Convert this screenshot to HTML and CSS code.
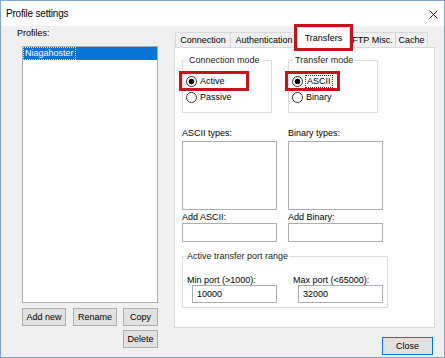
FILE: index.html
```html
<!DOCTYPE html>
<html>
<head>
<meta charset="utf-8">
<title>Profile settings</title>
<link rel="stylesheet" href="styles.css">
</head>
<body>
<div class="window">
  <div class="titlebar">
    <span class="title">Profile settings</span>
    <svg class="close-x" width="9" height="9" viewBox="0 0 9 9"><path d="M0.5 0.5L8.5 8.5M8.5 0.5L0.5 8.5" stroke="#2b2b2b" stroke-width="1" fill="none"/></svg>
  </div>
  <div class="content">
    <div class="left">
      <div class="lbl profiles-lbl">Profiles:</div>
      <div class="listbox profiles-list">
        <div class="item selected"><span class="item-focus">Niagahoster</span></div>
      </div>
      <div class="btn-row">
        <button class="btn btn-wide">Add new</button>
        <button class="btn btn-wide">Rename</button>
        <button class="btn btn-small">Copy</button>
      </div>
      <div class="btn-row btn-row-end">
        <button class="btn btn-small">Delete</button>
      </div>
    </div>
    <div class="right">
      <div class="tabs">
        <div class="tab tab-conn">Connection</div>
        <div class="tab tab-auth">Authentication</div>
        <div class="tab tab-transfers active">Transfers</div>
        <div class="tab tab-ftp">FTP Misc.</div>
        <div class="tab tab-cache">Cache</div>
      </div>
      <div class="panel">
        <div class="panel-grid">
          <fieldset class="group mode-group">
            <legend>Connection mode</legend>
            <div class="radio-row hl hl-active"><span class="radio checked"></span><span>Active</span></div>
            <div class="radio-row"><span class="radio"></span><span>Passive</span></div>
          </fieldset>
          <fieldset class="group mode-group">
            <legend>Transfer mode</legend>
            <div class="radio-row hl hl-ascii"><span class="radio checked"></span><span class="focus-text">ASCII</span></div>
            <div class="radio-row"><span class="radio"></span><span>Binary</span></div>
          </fieldset>
          <div class="col">
            <div class="lbl types-lbl">ASCII types:</div>
            <div class="listbox types-list"></div>
            <div class="lbl add-lbl">Add ASCII:</div>
            <div class="textbox"></div>
          </div>
          <div class="col">
            <div class="lbl types-lbl">Binary types:</div>
            <div class="listbox types-list"></div>
            <div class="lbl add-lbl">Add Binary:</div>
            <div class="textbox"></div>
          </div>
          <fieldset class="group port-group">
            <legend>Active transfer port range</legend>
            <div class="port-grid">
              <div class="port-cell">
                <div class="lbl port-lbl">Min port (&gt;1000):</div>
                <div class="textbox port-box">10000</div>
              </div>
              <div class="port-cell">
                <div class="lbl port-lbl">Max port (&lt;65000):</div>
                <div class="textbox port-box">32000</div>
              </div>
            </div>
          </fieldset>
        </div>
      </div>
      <div class="footer">
        <button class="btn btn-close">Close</button>
      </div>
    </div>
  </div>
</div>
</body>
</html>
```
FILE: styles.css
```css
* {
  box-sizing: border-box;
}

html, body {
  margin: 0;
  padding: 0;
  background: #ffffff;
}

body {
  font-family: "Liberation Sans", Arial, sans-serif;
  font-size: 9px;
  color: #000000;
}

.window {
  width: 445px;
  height: 358px;
  border: 1px solid #7fa3cf;
  background: #f0f0f0;
  display: flex;
  flex-direction: column;
}

.titlebar {
  height: 25px;
  flex: none;
  background: #ffffff;
  display: flex;
  align-items: center;
  justify-content: space-between;
  padding: 0 6px 0 5px;
}

.title {
  font-size: 10px;
  letter-spacing: -0.2px;
  color: #000;
}

.close-x {
  display: block;
  margin-top: 1px;
}

.content {
  flex: 1;
  display: flex;
}

.left {
  width: 157px;
  padding-left: 16px;
  flex: none;
}

.lbl {
  line-height: 11px;
  white-space: nowrap;
}

.profiles-lbl {
  margin-top: 1px;
  line-height: 12px;
}

.listbox {
  background: #ffffff;
  border: 1px solid #abadb3;
}

.profiles-list {
  margin-top: 7px;
  margin-left: 5px;
  width: 136px;
  height: 257px;
  padding: 0;
}

.item {
  height: 13px;
  line-height: 13px;
}

.item.selected {
  background: #0a74d4;
  color: #ffffff;
}

.item-focus {
  display: inline-block;
  line-height: 11px;
  margin-left: 1px;
  padding: 0 1px;
  outline: 1px dotted #cfe3f7;
}

.btn-row {
  display: flex;
  margin-left: 5px;
  width: 136px;
  margin-top: 5px;
  gap: 6px;
}

.btn-row-end {
  justify-content: flex-end;
  margin-top: 4px;
}

.btn {
  font-family: inherit;
  font-size: 9px;
  color: #000;
  height: 18px;
  padding: 0;
  margin: 0;
  background: #e1e1e1;
  border: 1px solid #adadad;
  border-radius: 0;
}

.btn-wide {
  width: 44px;
}

.btn-wide + .btn-wide {
  margin-left: 1px;
}

.btn-small {
  width: 35px;
}

.right {
  width: 261px;
  margin-left: 16px;
  flex: none;
  display: flex;
  flex-direction: column;
  padding-top: 1px;
}

.tabs {
  display: flex;
  align-items: flex-end;
  height: 20px;
  padding-left: 1px;
}

.tab {
  height: 15px;
  line-height: 14px;
  text-align: center;
  background: #f0f0f0;
  border: 1px solid #d9d9d9;
  border-bottom: none;
  margin-left: -1px;
  white-space: nowrap;
}

.tab-conn {
  width: 56px;
  margin-left: 0;
}

.tab-auth {
  width: 68px;
}

.tab-transfers {
  width: 53px;
}

.tab-ftp {
  width: 47px;
}

.tab-cache {
  width: 33px;
}

.tab.active {
  height: 20px;
  padding-top: 4px;
  line-height: 12px;
  background: #ffffff;
  position: relative;
  z-index: 1;
  margin-bottom: -1px;
  height: 21px;
  outline: 3px solid #c3141d;
}

.panel {
  height: 281px;
  background: #ffffff;
  border: 1px solid #d9d9d9;
  padding: 6px 7px;
}

.panel-grid {
  display: grid;
  grid-template-columns: 95px 95px;
  column-gap: 11px;
  align-items: start;
}

.group {
  margin: 0;
  border: 1px solid #dcdcdc;
  min-width: 0;
}

.group legend {
  padding: 0 2px;
  line-height: 12px;
  white-space: nowrap;
  color: #1a1a1a;
}

.mode-group {
  width: 90px;
  padding: 8px 3px 8px 3px;
}

.mode-group legend {
  margin-left: 1px;
}

.radio-row {
  display: flex;
  align-items: center;
  gap: 3px;
  height: 14px;
  white-space: nowrap;
}

.radio-row + .radio-row {
  margin-top: 2px;
}

.radio {
  width: 11px;
  height: 11px;
  border-radius: 50%;
  border: 1px solid #333333;
  background: #ffffff;
  flex: none;
}

.radio.checked {
  background: radial-gradient(circle, #000000 0, #000000 2.6px, #ffffff 3.1px);
}

.hl {
  outline: 3px solid #c3141d;
  margin-left: -4px;
  padding-left: 4px;
}

.hl-active {
  width: 64px;
}

.hl-ascii {
  width: 49px;
}

.focus-text {
  outline: 1px dotted #333333;
  line-height: 11px;
  padding: 0 1px;
}

.col {
  display: flex;
  flex-direction: column;
}

.types-lbl {
  margin-top: 15px;
}

.types-list {
  margin-top: 2px;
  height: 69px;
}

.add-lbl {
  margin-top: 2px;
}

.textbox {
  background: #ffffff;
  border: 1px solid #abadb3;
  height: 19px;
}

.port-group {
  grid-column: 1 / -1;
  width: 206px;
  margin-top: 8px;
  padding: 13px 4px 4px 4px;
}

.port-group legend {
  margin-left: -1px;
  padding: 0 1px;
}

.port-grid {
  display: grid;
  grid-template-columns: 106px 1fr;
}

.port-lbl {
  line-height: 10px;
}

.port-box {
  margin-left: 5px;
  width: 85px;
  height: 18px;
  line-height: 16px;
  padding-left: 4px;
}

.footer {
  display: flex;
  justify-content: flex-end;
  padding-right: 2px;
  margin-top: 9px;
}

.btn-close {
  width: 51px;
  border-color: #0078d7;
}
```
